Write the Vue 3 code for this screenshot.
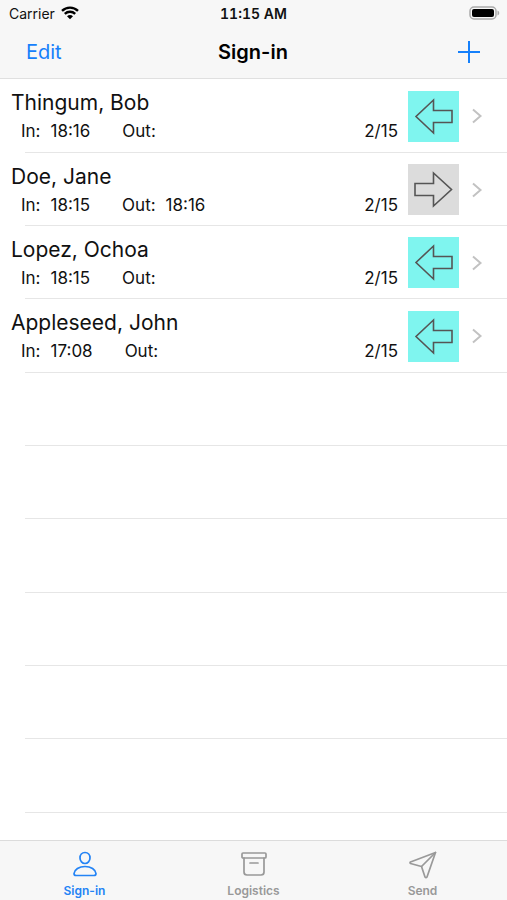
<template>
  <div class="screen">
    <header class="top">
      <div class="status-bar">
        <div class="carrier">
          <span>Carrier</span>
          <svg class="wifi" viewBox="0 0 18 14" aria-hidden="true">
            <path d="M1 4.9C5.5 .5 12.500 .5 17 4.900" />
            <path d="M3.800 7.800C6.800 5 11.200 5 14.200 7.800" />
            <path class="wifi-dot" d="M9 13.200L6 10.200C7.700 8.700 10.300 8.700 12 10.200Z" />
          </svg>
        </div>
        <time class="clock">11:15 AM</time>
        <svg class="battery" viewBox="0 0 31 14" aria-hidden="true">
          <rect class="battery-case" x="1" y="1" width="26" height="12" rx="4" />
          <rect x="3" y="3" width="22" height="8" rx="2" />
          <path class="battery-tip" d="M28.500 4.500C30.800 5.500 30.800 8.500 28.500 9.500Z" />
        </svg>
      </div>
      <div class="nav-bar">
        <button type="button" class="edit">Edit</button>
        <h1>Sign-in</h1>
        <button type="button" class="add" aria-label="Add">
          <svg viewBox="0 0 22 22"><path d="M11 0V22M0 11H22" /></svg>
        </button>
      </div>
    </header>

    <main>
      <ul class="list">
        <li v-for="person in people" :key="person.name" class="row">
          <div class="info">
            <h2>{{ person.name }}</h2>
            <div class="times">
              <span class="label">In:</span>
              <span class="in-time">{{ person.in }}</span>
              <span class="label">Out:</span>
              <span>{{ person.out }}</span>
              <span class="date">{{ person.date }}</span>
            </div>
          </div>
          <button
            type="button"
            class="toggle"
            :class="{ out: person.out }"
            :aria-label="person.out ? 'Signed out' : 'Sign out'"
          >
            <svg viewBox="0 0 51 51">
              <path v-if="person.out" d="M7 19.500H25.500V9L43.500 25.500L25.500 42V31.500H7Z" />
              <path v-else d="M44 19.500H25.500V9L8 25.500L25.500 42V31.500H44Z" />
            </svg>
          </button>
          <svg class="chevron" viewBox="0 0 10 16" aria-hidden="true">
            <path d="M1 1.500L8.500 8L1 14.500" />
          </svg>
        </li>
        <li v-for="n in emptyRows" :key="n" class="row" aria-hidden="true"></li>
      </ul>
    </main>

    <nav class="tabs">
      <button
        v-for="tab in tabs"
        :key="tab.id"
        type="button"
        class="tab"
        :class="{ active: tab.id === activeTab }"
        @click="activeTab = tab.id"
      >
        <svg viewBox="0 0 28 28" aria-hidden="true">
          <path v-for="d in tab.paths" :key="d" :d="d" />
        </svg>
        <span>{{ tab.label }}</span>
      </button>
    </nav>
  </div>
</template>

<script setup>
import { ref } from 'vue'

const people = ref([
  { name: 'Thingum, Bob', in: '18:16', out: '', date: '2/15' },
  { name: 'Doe, Jane', in: '18:15', out: '18:16', date: '2/15' },
  { name: 'Lopez, Ochoa', in: '18:15', out: '', date: '2/15' },
  { name: 'Appleseed, John', in: '17:08', out: '', date: '2/15' }
])

const emptyRows = 6
const activeTab = ref('signin')

const tabs = [
  {
    id: 'signin',
    label: 'Sign-in',
    paths: [
      'M14 2.5C10.900 2.500 9 5 9 8C9 11 11.200 13.500 14 13.500C16.800 13.500 19 11 19 8C19 5 17.100 2.500 14 2.500Z',
      'M5 25.500C3.500 25.500 3 24.700 3 23.500C3.500 19.500 8 16.500 14 16.500C20 16.500 24.500 19.500 25 23.500C25 24.700 24.500 25.500 23 25.500Z'
    ]
  },
  {
    id: 'logistics',
    label: 'Logistics',
    paths: [
      'M3 3H25Q26 3 26 4V7Q26 8 25 8H3Q2 8 2 7V4Q2 3 3 3Z',
      'M4 8V22Q4 25 7 25H21Q24 25 24 22V8',
      'M10 13H18'
    ]
  },
  {
    id: 'send',
    label: 'Send',
    paths: [
      'M26.500 2.500L1.500 12Q.5 12.500 1.500 13.500L12.500 16.500L16 27Q17 28.200 18 27Z',
      'M26.500 2.500L12.500 16.500'
    ]
  }
]
</script>

<style>
body {
  margin: 0;
  background: #fff;
}
</style>

<style scoped>
.screen {
  display: flex;
  flex-direction: column;
  min-height: 100vh;
  font-family: Inter, "Liberation Sans", sans-serif;
  color: #111;
}

button {
  border: 0;
  padding: 0;
  background: none;
  font: inherit;
  cursor: pointer;
}

svg {
  display: block;
  overflow: visible;
}

.top {
  background: #f7f7f7;
  border-bottom: 1px solid #e0e0e0;
}

.status-bar {
  display: grid;
  grid-template-columns: 1fr auto 1fr;
  align-items: center;
  height: 26px;
  padding: 0 7px;
  font-size: 14px;
}

.carrier {
  display: flex;
  align-items: center;
  gap: 6px;
  padding-left: 2px;
}

.wifi {
  width: 18px;
  height: 14px;
  fill: none;
  stroke: #000;
  stroke-width: 2.4;
}

.wifi-dot {
  fill: #000;
  stroke: none;
}

.clock {
  font-weight: 600;
  font-variant-numeric: tabular-nums;
}

.battery {
  width: 31px;
  height: 14px;
  justify-self: end;
}

.battery-case {
  fill: none;
  stroke: #aaa;
  stroke-width: 1.5;
}

.battery-tip {
  fill: #aaa;
}

.nav-bar {
  display: grid;
  grid-template-columns: 1fr auto 1fr;
  align-items: center;
  height: 52px;
  padding: 0 27px 0 26px;
}

h1 {
  margin: 0;
  font-size: 20px;
  font-weight: 600;
  color: #000;
}

.edit {
  justify-self: start;
  font-size: 20px;
  color: #1580fb;
}

.add {
  justify-self: end;
}

.add svg {
  width: 22px;
  height: 22px;
  stroke: #1580fb;
  stroke-width: 2;
}

main {
  flex: 1;
}

.list {
  margin: 0;
  padding: 0;
  list-style: none;
}

.row {
  display: flex;
  align-items: center;
  box-sizing: border-box;
  height: 73px;
  padding: 0 25px 0 11px;
  background: linear-gradient(#e6e6e6, #e6e6e6) 25px 100% / 100% 1px no-repeat;
}

.row:nth-child(3n + 1) {
  height: 74px;
}

.info {
  flex: 1;
  padding-top: 2px;
}

h2 {
  margin: 0;
  font-size: 21px;
  font-weight: 400;
  line-height: 28px;
}

.times {
  display: flex;
  padding-left: 10px;
  font-size: 17px;
  line-height: 28px;
}

.label {
  margin-right: 10px;
}

.in-time {
  margin-right: 32px;
}

.date {
  margin-left: auto;
}

.toggle {
  width: 51px;
  height: 51px;
  margin: 0 13px 0 10px;
  background: #7ff5ef;
}

.toggle.out {
  background: #dcdcdc;
}

.toggle path {
  fill: none;
  stroke: #555;
  stroke-width: 1.6;
}

.chevron {
  width: 10px;
  height: 16px;
  fill: none;
  stroke: #c2c2c2;
  stroke-width: 2;
}

.tabs {
  display: grid;
  grid-template-columns: repeat(3, 1fr);
  height: 59px;
  background: #f7f7f7;
  border-top: 1px solid #dcdcdc;
}

.tab {
  display: flex;
  flex-direction: column;
  align-items: center;
  gap: 5px;
  padding-top: 9px;
  font-size: 12px;
  font-weight: 600;
  line-height: 16px;
  color: #999;
}

.tab.active {
  color: #2383f5;
}

.tab svg {
  width: 28px;
  height: 28px;
  fill: none;
  stroke: currentColor;
  stroke-width: 1.7;
  stroke-linejoin: round;
  stroke-linecap: round;
}
</style>
